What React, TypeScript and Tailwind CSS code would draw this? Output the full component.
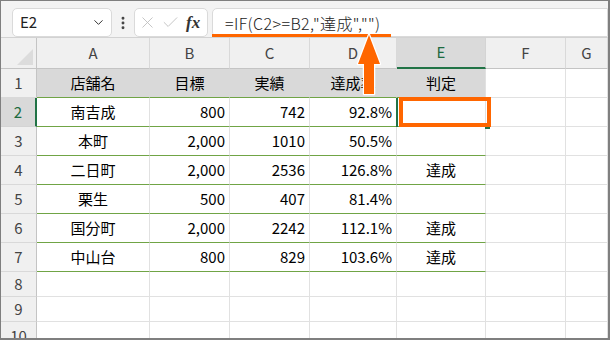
import React from "react";
import { ChevronDown, EllipsisVertical, X, Check } from "lucide-react";

const cols = ["A", "B", "C", "D", "E", "F", "G"];
const head = ["店舗名", "目標", "実績", "達成率", "判定"];
const rows = [
  ["南吉成", "800", "742", "92.8%", ""],
  ["本町", "2,000", "1010", "50.5%", ""],
  ["二日町", "2,000", "2536", "126.8%", "達成"],
  ["栗生", "500", "407", "81.4%", ""],
  ["国分町", "2,000", "2242", "112.1%", "達成"],
  ["中山台", "800", "829", "103.6%", "達成"],
];

const font = { fontFamily: '"Noto Sans CJK JP", "Noto Sans", sans-serif' };

const RowHead = ({ n, active }: { n: number; active?: boolean }) => (
  <div
    className={
      active
        ? "flex items-center justify-center bg-[#d9d9d9] text-[#1d6b40] text-[15px] border-r-2 border-r-[#217346] border-b border-b-[#d4d4d4]"
        : "flex items-center justify-center bg-[#f0f0f0] text-[#444] text-[15px] border-r border-r-[#c4c4c4] border-b border-b-[#d9d9d9]"
    }
  >
    {n}
  </div>
);

const Empty = () => <div className="border-r border-b border-[#e1e1e1]" />;

export default function App() {
  return (
    <div
      className="relative w-[610px] h-[340px] overflow-hidden bg-white border-l border-t border-r-2 border-b-2 border-[#7f7f7f]"
      style={font}
    >
      {/* Formula bar */}
      <div className="h-[37px] bg-[#f3f3f3] border-b border-[#d2d2d2] flex items-start pt-[7px] pl-[11px]">
        <div className="w-[100px] h-[29px] bg-white border border-[#dadada] rounded-[5px] flex items-center justify-between pl-[7px] pr-[5px]">
          <span className="text-[15px] text-[#222]">E2</span>
          <ChevronDown size={15} strokeWidth={1.6} className="text-[#333]" />
        </div>
        <div className="w-[22px] h-[29px] flex items-center justify-center">
          <EllipsisVertical size={16} strokeWidth={2.4} className="text-[#444]" />
        </div>
        <div className="w-[74px] h-[29px] bg-white border border-[#dadada] rounded-[5px] flex items-center pl-[3px] gap-[4px]">
          <X size={19} strokeWidth={1.1} className="text-[#bdbdbd]" />
          <Check size={19} strokeWidth={1.1} className="text-[#bdbdbd]" />
          <span
            className="text-[17px] font-bold italic text-[#333] ml-[2px]"
            style={{ fontFamily: '"Liberation Serif", serif' }}
          >
            fx
          </span>
        </div>
        <div className="ml-[4px] flex-1 h-[29px] bg-white border border-[#dadada] rounded-l-[5px] flex items-center pl-[12px]">
          <span className="text-[16px] font-light tracking-[0.4px] text-[#222]">=IF(C2&gt;=B2,"達成","")</span>
        </div>
      </div>

      {/* Sheet grid */}
      <div className="grid grid-cols-[36px_113px_80px_80px_87px_89px_80px_1fr] grid-rows-[31px_repeat(7,29px)_25px_25px_25px] text-[15px] text-black">
        {/* Column headers */}
        <div className="relative bg-[#f0f0f0] border-r border-b border-[#c4c4c4]">
          <svg className="absolute left-[15px] top-[10px]" width="18" height="18" viewBox="0 0 18 18">
            <polygon points="17,1 17,17 1,17" fill="#dcdcdc" />
          </svg>
        </div>
        {cols.map((c) =>
          c === "E" ? (
            <div
              key={c}
              className="flex items-center justify-center bg-[#dadada] text-[#1d6b40] border-r border-r-[#d4d4d4] border-b-2 border-b-[#217346]"
            >
              {c}
            </div>
          ) : (
            <div
              key={c}
              className="flex items-center justify-center bg-[#f0f0f0] text-[#444] border-r border-r-[#d9d9d9] border-b border-b-[#c4c4c4]"
            >
              {c}
            </div>
          )
        )}

        {/* Row 1 */}
        <RowHead n={1} />
        {head.map((h, i) => (
          <div
            key={h}
            className={
              i === 4
                ? "flex items-center justify-center bg-[#d9d9d9] border-r border-r-[#e1e1e1] border-b border-b-[#70a445]"
                : "flex items-center justify-center bg-[#d9d9d9] border-r border-r-[#d9d9d9] border-b border-b-[#70a445]"
            }
          >
            {h}
          </div>
        ))}
        <Empty />
        <Empty />

        {/* Rows 2-7 */}
        {rows.map((r, ri) => (
          <React.Fragment key={ri}>
            <RowHead n={ri + 2} active={ri === 0} />
            {r.map((v, ci) => (
              <div
                key={ci}
                className={
                  ci === 0 || ci === 4
                    ? "flex items-center justify-center border-r border-r-[#e1e1e1] border-b border-b-[#70a445]"
                    : "flex items-center justify-end pr-[4px] border-r border-r-[#e1e1e1] border-b border-b-[#70a445]"
                }
              >
                {v}
              </div>
            ))}
            <Empty />
            <Empty />
          </React.Fragment>
        ))}

        {/* Rows 8-10 */}
        {[8, 9, 10].map((n) => (
          <React.Fragment key={n}>
            <div
              className={
                n === 10
                  ? "flex items-start justify-center pt-[3px] bg-[#f0f0f0] text-[#444] border-r border-r-[#c4c4c4] border-b border-b-[#d9d9d9]"
                  : "flex items-center justify-center bg-[#f0f0f0] text-[#444] border-r border-r-[#c4c4c4] border-b border-b-[#d9d9d9]"
              }
            >
              {n}
            </div>
            {cols.map((c) => (
              <Empty key={c} />
            ))}
          </React.Fragment>
        ))}
      </div>

      {/* Active cell E2 */}
      <div className="absolute left-[395px] top-[97px] w-[2px] h-[29px] bg-[#217346]" />
      <div className="absolute left-[484px] top-[123px] w-[5px] h-[5px] bg-[#217346]" />
      <div className="absolute left-[398px] top-[96px] w-[92px] h-[30px] border-4 border-[#ff6600]" />

      {/* Formula underline */}
      <div className="absolute left-[211px] top-[33px] w-[179px] h-[3px] bg-[#ff6600]" />

      {/* Arrow */}
      <svg className="absolute left-[353px] top-[30px]" width="32" height="67" viewBox="0 0 32 67">
        <polygon
          points="15,4 26,33 20,33 20,63 10,63 10,33 4,33"
          fill="#ff6600"
          stroke="#ffffff"
          strokeWidth="2.5"
          strokeLinejoin="round"
          paintOrder="stroke"
        />
      </svg>
    </div>
  );
}
